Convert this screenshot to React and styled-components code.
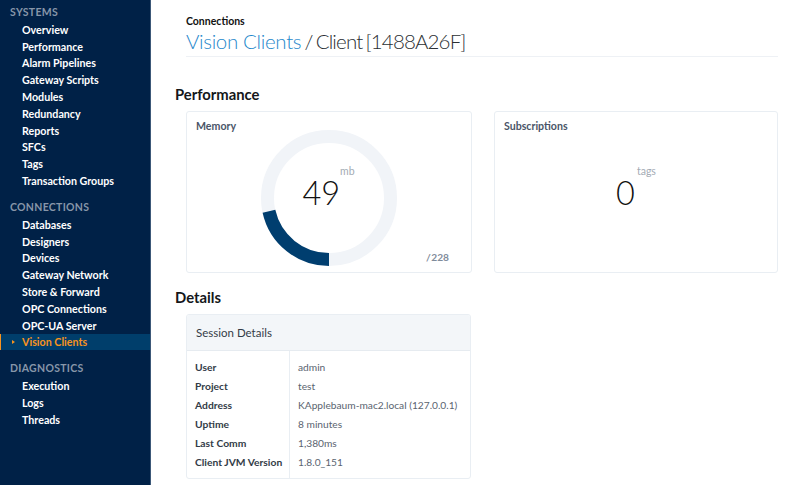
import React from "react";
import styled, { createGlobalStyle } from "styled-components";

const font = `Lato, "Noto Sans", "Liberation Sans", sans-serif`;

const Global = createGlobalStyle`
  html, body { margin: 0; padding: 0; background: #fff; height: 100%; overflow: hidden; }
  #root { height: 485px; }
  * { box-sizing: border-box; }
`;

const Page = styled.div`
  display: flex;
  width: 800px;
  height: 485px;
  font-family: ${font};
  overflow: hidden;
`;

const Sidebar = styled.nav`
  flex: 0 0 151px;
  height: 485px;
  background: #002147;
  border-right: 1px solid #3c5878;
  padding-top: 6px;
`;

const NavHeading = styled.div`
  height: 13px;
  line-height: 13px;
  margin: 0 0 2px 10px;
  font-size: 10.5px;
  font-weight: 700;
  letter-spacing: 0.3px;
  color: #8796a9;
`;

const NavGroup = styled.div`
  margin-bottom: 12px;
`;

const NavItem = styled.div`
  display: flex;
  align-items: center;
  height: 16.8px;
  padding-left: ${(p) => (p.$active ? "11px" : "22px")};
  font-size: 10.7px;
  font-weight: 700;
  white-space: nowrap;
  color: ${(p) => (p.$active ? "#f7931e" : "#fff")};
  background: ${(p) => (p.$active ? "#003e6b" : "transparent")};
  border-left: ${(p) => (p.$active ? "1px solid #f7931e" : "none")};
`;

const Caret = styled.span`
  flex: none;
  width: 0;
  height: 0;
  margin-right: 7px;
  border-left: 3px solid #f7931e;
  border-top: 2.5px solid transparent;
  border-bottom: 2.5px solid transparent;
`;

const Main = styled.main`
  flex: 1;
  min-width: 0;
  padding: 15px 22px 0 24px;
`;

const Header = styled.header`
  margin: 0 0 29px 11px;
  height: 42px;
  border-bottom: 1px solid #eef1f5;
`;

const Crumb = styled.div`
  height: 13px;
  line-height: 13px;
  font-size: 10.5px;
  font-weight: 700;
  color: #111;
`;

const Title = styled.h1`
  margin: -1px 0 0;
  height: 28px;
  line-height: 28px;
  font-size: 20.5px;
  font-weight: 300;
  color: #2b2f33;
  letter-spacing: -0.85px;
  word-spacing: -1.5px;
  white-space: nowrap;
`;

const TitleLink = styled.span`
  color: #1f88cb;
  letter-spacing: -0.35px;
  word-spacing: 0;
`;

const SectionTitle = styled.h2`
  margin: 0 0 7px;
  height: 18px;
  line-height: 16px;
  font-size: 14.8px;
  font-weight: 700;
  color: #14171a;
`;

const Cards = styled.div`
  display: grid;
  grid-template-columns: 286px 284px;
  gap: 22px;
  margin: 0 0 16px 11px;
`;

const Card = styled.section`
  display: grid;
  height: 162px;
  padding: 8px 9px;
  border: 1px solid #e9eef3;
  border-radius: 3px;
  background: #fff;
`;

const CardTitle = styled.div`
  grid-area: 1 / 1;
  align-self: start;
  height: 13px;
  line-height: 13px;
  font-size: 10.6px;
  font-weight: 700;
  color: #4a5568;
`;

const Stage = styled.div`
  grid-area: 1 / 1;
  display: grid;
  place-items: center;
  height: 138px;
  margin-top: 9px;
`;

const Gauge = styled.svg`
  grid-area: 1 / 1;
`;

const Readout = styled.div`
  grid-area: 1 / 1;
  display: flex;
  align-items: flex-start;
  gap: ${(p) => p.$gap}px;
  padding-bottom: 18px;
  margin-left: ${(p) => p.$shift}px;
`;

const Metric = styled.div`
  margin-top: 8px;
  font-size: 32.5px;
  font-weight: 300;
  line-height: 40px;
  color: #111;
`;

const Unit = styled.div`
  font-size: 10.5px;
  line-height: 13px;
  color: #a3abb4;
`;

const Total = styled.div`
  grid-area: 1 / 1;
  align-self: end;
  justify-self: end;
  margin: 0 13px 3px 0;
  font-size: 10.2px;
  line-height: 13px;
  font-weight: 700;
  word-spacing: -2px;
  color: #7f8c9b;
`;

const Panel = styled.section`
  width: 285px;
  height: 165px;
  margin-left: 11px;
  border: 1px solid #e9eef3;
  border-radius: 3px;
  overflow: hidden;
`;

const PanelHead = styled.div`
  height: 36px;
  line-height: 35px;
  padding-left: 9px;
  background: #f3f6f9;
  border-bottom: 1px solid #e6ebf0;
  font-size: 11.5px;
  color: #333c47;
`;

const DetailsGrid = styled.div`
  display: grid;
  grid-template-columns: 103px 1fr;
  height: 128px;
`;

const Labels = styled.div`
  padding: 7px 0 0 8px;
  border-right: 1px solid #e9eef3;
`;

const Values = styled.div`
  padding: 7px 0 0 8px;
`;

const Label = styled.div`
  height: 19px;
  line-height: 19px;
  font-size: 10.3px;
  font-weight: 700;
  color: #333c47;
  white-space: nowrap;
`;

const Value = styled.div`
  height: 19px;
  line-height: 19px;
  font-size: 10.2px;
  color: #5a6470;
  white-space: nowrap;
`;

const nav = [
  ["SYSTEMS", ["Overview", "Performance", "Alarm Pipelines", "Gateway Scripts", "Modules", "Redundancy", "Reports", "SFCs", "Tags", "Transaction Groups"]],
  ["CONNECTIONS", ["Databases", "Designers", "Devices", "Gateway Network", "Store & Forward", "OPC Connections", "OPC-UA Server", "Vision Clients"]],
  ["DIAGNOSTICS", ["Execution", "Logs", "Threads"]],
];

const details = [
  ["User", "admin"],
  ["Project", "test"],
  ["Address", "KApplebaum-mac2.local (127.0.0.1)"],
  ["Uptime", "8 minutes"],
  ["Last Comm", "1,380ms"],
  ["Client JVM Version", "1.8.0_151"],
];

const C = 2 * Math.PI * 61.5;
const used = (49 / 228) * C;

export default function App() {
  return (
    <Page>
      <Global />
      <Sidebar>
        {nav.map(([heading, items]) => (
          <NavGroup key={heading}>
            <NavHeading>{heading}</NavHeading>
            {items.map((item) => (
              <NavItem key={item} $active={item === "Vision Clients"}>
                {item === "Vision Clients" && <Caret />}
                {item}
              </NavItem>
            ))}
          </NavGroup>
        ))}
      </Sidebar>
      <Main>
        <Header>
          <Crumb>Connections</Crumb>
          <Title>
            <TitleLink>Vision Clients</TitleLink> / Client [1488A26F]
          </Title>
        </Header>
        <SectionTitle>Performance</SectionTitle>
        <Cards>
          <Card>
            <CardTitle>Memory</CardTitle>
            <Stage>
              <Gauge width="138" height="138" viewBox="0 0 138 138">
                <circle cx="69" cy="69" r="61.5" fill="none" stroke="#f1f4f8" strokeWidth="13" />
                <circle
                  cx="69"
                  cy="69"
                  r="61.5"
                  fill="none"
                  stroke="#003e6f"
                  strokeWidth="13"
                  strokeDasharray={`${used} ${C}`}
                  transform="rotate(90 69 69)"
                />
              </Gauge>
              <Readout $gap={0} $shift={-1}>
                <Metric>49</Metric>
                <Unit>mb</Unit>
              </Readout>
            </Stage>
            <Total>/ 228</Total>
          </Card>
          <Card>
            <CardTitle>Subscriptions</CardTitle>
            <Stage>
              <Readout $gap={2} $shift={0}>
                <Metric>0</Metric>
                <Unit>tags</Unit>
              </Readout>
            </Stage>
          </Card>
        </Cards>
        <SectionTitle>Details</SectionTitle>
        <Panel>
          <PanelHead>Session Details</PanelHead>
          <DetailsGrid>
            <Labels>
              {details.map(([k]) => (
                <Label key={k}>{k}</Label>
              ))}
            </Labels>
            <Values>
              {details.map(([k, v]) => (
                <Value key={k}>{v}</Value>
              ))}
            </Values>
          </DetailsGrid>
        </Panel>
      </Main>
    </Page>
  );
}
